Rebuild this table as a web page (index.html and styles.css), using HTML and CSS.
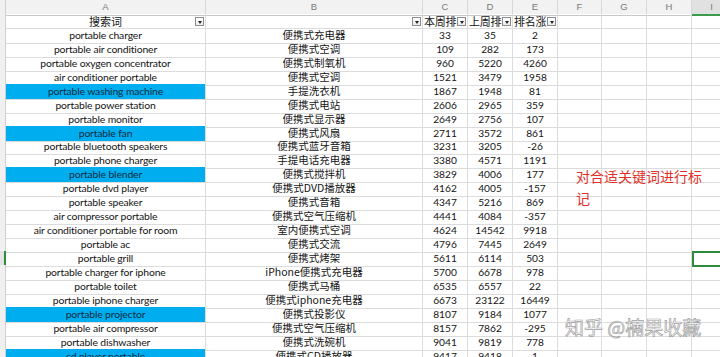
FILE: index.html
```html
<!DOCTYPE html>
<html lang="zh-CN">
<head>
<meta charset="utf-8">
<title>搜索词</title>
<link rel="stylesheet" href="styles.css">
</head>
<body>
<div class="sheet">
  <div class="row colhead">
    <div class="rh"></div><div class="ch">A</div><div class="ch">B</div><div class="ch">C</div><div class="ch">D</div><div class="ch">E</div><div class="ch">F</div><div class="ch">G</div><div class="ch">H</div><div class="ch sel">I</div>
  </div>
  <div class="row">
    <div class="rh"></div>
    <div class="c hd center"><span class="hdtext">搜索词</span><span class="dd"></span></div>
    <div class="c hd end"><span class="dd"></span></div>
    <div class="c hd"><span class="hdtext left">本周排</span><span class="dd"></span></div>
    <div class="c hd"><span class="hdtext left">上周排</span><span class="dd"></span></div>
    <div class="c hd"><span class="hdtext left">排名涨</span><span class="dd"></span></div>
    <div class="c"></div><div class="c"></div><div class="c"></div><div class="c"></div>
  </div>
  <div class="row"><div class="rh"></div><div class="c en">portable charger</div><div class="c zh">便携式充电器</div><div class="c n">33</div><div class="c n">35</div><div class="c n">2</div><div class="c"></div><div class="c"></div><div class="c"></div><div class="c"></div></div>
  <div class="row"><div class="rh"></div><div class="c en">portable air conditioner</div><div class="c zh">便携式空调</div><div class="c n">109</div><div class="c n">282</div><div class="c n">173</div><div class="c"></div><div class="c"></div><div class="c"></div><div class="c"></div></div>
  <div class="row"><div class="rh"></div><div class="c en">portable oxygen concentrator</div><div class="c zh">便携式制氧机</div><div class="c n">960</div><div class="c n">5220</div><div class="c n">4260</div><div class="c"></div><div class="c"></div><div class="c"></div><div class="c"></div></div>
  <div class="row"><div class="rh"></div><div class="c en">air conditioner portable</div><div class="c zh">便携式空调</div><div class="c n">1521</div><div class="c n">3479</div><div class="c n">1958</div><div class="c"></div><div class="c"></div><div class="c"></div><div class="c"></div></div>
  <div class="row"><div class="rh"></div><div class="c en mark">portable washing machine</div><div class="c zh">手提洗衣机</div><div class="c n">1867</div><div class="c n">1948</div><div class="c n">81</div><div class="c"></div><div class="c"></div><div class="c"></div><div class="c"></div></div>
  <div class="row"><div class="rh"></div><div class="c en">portable power station</div><div class="c zh">便携式电站</div><div class="c n">2606</div><div class="c n">2965</div><div class="c n">359</div><div class="c"></div><div class="c"></div><div class="c"></div><div class="c"></div></div>
  <div class="row"><div class="rh"></div><div class="c en">portable monitor</div><div class="c zh">便携式显示器</div><div class="c n">2649</div><div class="c n">2756</div><div class="c n">107</div><div class="c"></div><div class="c"></div><div class="c"></div><div class="c"></div></div>
  <div class="row"><div class="rh"></div><div class="c en mark">portable fan</div><div class="c zh">便携式风扇</div><div class="c n">2711</div><div class="c n">3572</div><div class="c n">861</div><div class="c"></div><div class="c"></div><div class="c"></div><div class="c"></div></div>
  <div class="row"><div class="rh"></div><div class="c en">portable bluetooth speakers</div><div class="c zh">便携式蓝牙音箱</div><div class="c n">3231</div><div class="c n">3205</div><div class="c n">-26</div><div class="c"></div><div class="c"></div><div class="c"></div><div class="c"></div></div>
  <div class="row"><div class="rh"></div><div class="c en">portable phone charger</div><div class="c zh">手提电话充电器</div><div class="c n">3380</div><div class="c n">4571</div><div class="c n">1191</div><div class="c"></div><div class="c"></div><div class="c"></div><div class="c"></div></div>
  <div class="row"><div class="rh"></div><div class="c en mark">portable blender</div><div class="c zh">便携式搅拌机</div><div class="c n">3829</div><div class="c n">4006</div><div class="c n">177</div><div class="c"></div><div class="c"></div><div class="c"></div><div class="c"></div></div>
  <div class="row"><div class="rh"></div><div class="c en">portable dvd player</div><div class="c zh">便携式DVD播放器</div><div class="c n">4162</div><div class="c n">4005</div><div class="c n">-157</div><div class="c"></div><div class="c"></div><div class="c"></div><div class="c"></div></div>
  <div class="row"><div class="rh"></div><div class="c en">portable speaker</div><div class="c zh">便携式音箱</div><div class="c n">4347</div><div class="c n">5216</div><div class="c n">869</div><div class="c"></div><div class="c"></div><div class="c"></div><div class="c"></div></div>
  <div class="row"><div class="rh"></div><div class="c en">air compressor portable</div><div class="c zh">便携式空气压缩机</div><div class="c n">4441</div><div class="c n">4084</div><div class="c n">-357</div><div class="c"></div><div class="c"></div><div class="c"></div><div class="c"></div></div>
  <div class="row"><div class="rh"></div><div class="c en">air conditioner portable for room</div><div class="c zh">室内便携式空调</div><div class="c n">4624</div><div class="c n">14542</div><div class="c n">9918</div><div class="c"></div><div class="c"></div><div class="c"></div><div class="c"></div></div>
  <div class="row"><div class="rh"></div><div class="c en">portable ac</div><div class="c zh">便携式交流</div><div class="c n">4796</div><div class="c n">7445</div><div class="c n">2649</div><div class="c"></div><div class="c"></div><div class="c"></div><div class="c"></div></div>
  <div class="row"><div class="rh selrow"></div><div class="c en">portable grill</div><div class="c zh">便携式烤架</div><div class="c n">5611</div><div class="c n">6114</div><div class="c n">503</div><div class="c"></div><div class="c"></div><div class="c"></div><div class="c active"></div></div>
  <div class="row"><div class="rh"></div><div class="c en">portable charger for iphone</div><div class="c zh">iPhone便携式充电器</div><div class="c n">5700</div><div class="c n">6678</div><div class="c n">978</div><div class="c"></div><div class="c"></div><div class="c"></div><div class="c"></div></div>
  <div class="row"><div class="rh"></div><div class="c en">portable toilet</div><div class="c zh">便携式马桶</div><div class="c n">6535</div><div class="c n">6557</div><div class="c n">22</div><div class="c"></div><div class="c"></div><div class="c"></div><div class="c"></div></div>
  <div class="row"><div class="rh"></div><div class="c en">portable iphone charger</div><div class="c zh">便携式iphone充电器</div><div class="c n">6673</div><div class="c n">23122</div><div class="c n">16449</div><div class="c"></div><div class="c"></div><div class="c"></div><div class="c"></div></div>
  <div class="row"><div class="rh"></div><div class="c en mark">portable projector</div><div class="c zh">便携式投影仪</div><div class="c n">8107</div><div class="c n">9184</div><div class="c n">1077</div><div class="c"></div><div class="c"></div><div class="c"></div><div class="c"></div></div>
  <div class="row"><div class="rh"></div><div class="c en">portable air compressor</div><div class="c zh">便携式空气压缩机</div><div class="c n">8157</div><div class="c n">7862</div><div class="c n">-295</div><div class="c"></div><div class="c"></div><div class="c"></div><div class="c"></div></div>
  <div class="row"><div class="rh"></div><div class="c en">portable dishwasher</div><div class="c zh">便携式洗碗机</div><div class="c n">9041</div><div class="c n">9819</div><div class="c n">778</div><div class="c"></div><div class="c"></div><div class="c"></div><div class="c"></div></div>
  <div class="row"><div class="rh"></div><div class="c en mark">cd player portable</div><div class="c zh">便携式CD播放器</div><div class="c n">9417</div><div class="c n">9418</div><div class="c n">1</div><div class="c"></div><div class="c"></div><div class="c"></div><div class="c"></div></div>

  <div class="note">对合适关键词进行标记</div>
  <div class="watermark">知乎 @楠果收藏</div>
</div>
</body>
</html>
```

FILE: styles.css
```css
html, body {
  margin: 0;
  padding: 0;
  background: #ffffff;
  overflow: hidden;
}

.sheet {
  position: relative;
  width: 720px;
  height: 357px;
  overflow: hidden;
  font-family: "Lato", "Noto Sans CJK SC", sans-serif;
  color: #141414;
}

.row {
  display: grid;
  grid-template-columns: 6px 200px 217px 45px 45px 45px 44px 45px 45px 40px;
  height: 13.95px;
}

.row.colhead {
  height: 14px;
  background: #f2f2f2;
}

.rh {
  background: #f0f0f0;
  border-right: 1px solid #cfcfcf;
  border-bottom: 1px solid #dcdcdc;
  box-sizing: border-box;
}

.rh.selrow {
  background: #e3e3e3;
  border-right: 2px solid #2e8b3e;
}

.ch {
  box-sizing: border-box;
  border-right: 1px solid #d8d8d8;
  border-bottom: 1px solid #c8c8c8;
  font-family: "Liberation Sans", sans-serif;
  font-size: 9.5px;
  line-height: 14px;
  text-align: center;
  color: #7a7a7a;
}

.ch.sel {
  background: #e1e1e1;
  border-bottom: 2px solid #3c9a4c;
}

.c {
  box-sizing: border-box;
  border-right: 1px solid #dcdcdc;
  border-bottom: 1px solid #dcdcdc;
  font-size: 10px;
  line-height: 15px;
  white-space: nowrap;
}

.en {
  text-align: center;
  font-family: "Lato", sans-serif;
  font-size: 10.4px;
  letter-spacing: -0.15px;
}

.zh {
  text-align: center;
  font-family: "Noto Sans CJK SC", sans-serif;
  font-size: 10.5px;
  line-height: 14px;
}

.n {
  text-align: center;
  font-family: "Lato", sans-serif;
  font-size: 10.2px;
}

.mark {
  background: #00aeef;
  color: #0d2a40;
}

.hd {
  display: flex;
  align-items: center;
  font-family: "Noto Sans CJK SC", sans-serif;
  font-size: 11px;
  line-height: 13px;
  padding-top: 1px;
}

.hd.center {
  justify-content: center;
}

.hd.end {
  justify-content: flex-end;
}

.hdtext {
  flex: 1;
  white-space: nowrap;
  text-align: center;
}

.hd.center .hdtext {
  padding-left: 10px;
}

.hdtext.left {
  text-align: left;
  padding-left: 1px;
  letter-spacing: -0.3px;
}

.dd {
  flex: none;
  width: 9px;
  height: 9px;
  margin-right: 1px;
  box-sizing: border-box;
  border: 1px solid #8c8c8c;
  background: linear-gradient(#ffffff, #ececec);
  position: relative;
}

.dd::after {
  content: "";
  position: absolute;
  left: 1.5px;
  top: 2.5px;
  border-left: 2.5px solid transparent;
  border-right: 2.5px solid transparent;
  border-top: 3px solid #222;
}

.active {
  border: 2px solid #2e8b3e;
}

.note {
  position: absolute;
  left: 576px;
  top: 165px;
  width: 135px;
  font-family: "Noto Sans CJK SC", sans-serif;
  font-size: 14px;
  line-height: 22px;
  color: #e0312b;
}

.watermark {
  position: absolute;
  left: 565px;
  top: 314px;
  font-family: "Noto Sans CJK SC", sans-serif;
  font-size: 19px;
  line-height: 25px;
  color: rgba(255, 255, 255, 0.8);
  -webkit-text-stroke: 0.7px rgba(140, 140, 140, 0.85);
  white-space: nowrap;
}
```
